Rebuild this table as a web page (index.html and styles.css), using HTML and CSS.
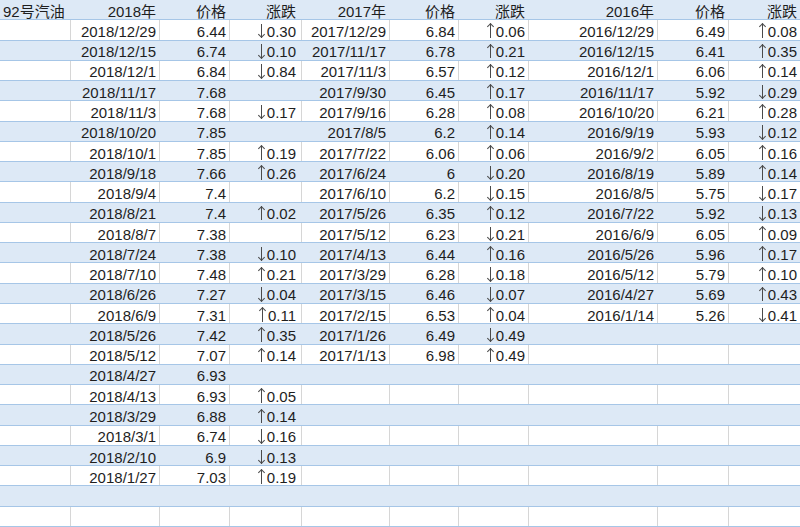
FILE: index.html
```html
<!DOCTYPE html>
<html lang="zh-CN">
<head>
<meta charset="utf-8">
<title>92号汽油</title>
<link rel="stylesheet" href="styles.css">
</head>
<body>
<div class="sheet">
  <div class="row blue"><span class="c l">92号汽油</span><span class="c">2018年</span><span class="c">价格</span><span class="c">涨跌</span><span class="c">2017年</span><span class="c">价格</span><span class="c">涨跌</span><span class="c">2016年</span><span class="c">价格</span><span class="c">涨跌</span></div>
  <div class="row"><span class="c"></span><span class="c">2018/12/29</span><span class="c">6.44</span><span class="c"><i class="dn"></i>0.30</span><span class="c">2017/12/29</span><span class="c">6.84</span><span class="c"><i class="up"></i>0.06</span><span class="c">2016/12/29</span><span class="c">6.49</span><span class="c"><i class="up"></i>0.08</span></div>
  <div class="row blue"><span class="c"></span><span class="c">2018/12/15</span><span class="c">6.74</span><span class="c"><i class="dn"></i>0.10</span><span class="c">2017/11/17</span><span class="c">6.78</span><span class="c"><i class="up"></i>0.21</span><span class="c">2016/12/15</span><span class="c">6.41</span><span class="c"><i class="up"></i>0.35</span></div>
  <div class="row"><span class="c"></span><span class="c">2018/12/1</span><span class="c">6.84</span><span class="c"><i class="dn"></i>0.84</span><span class="c">2017/11/3</span><span class="c">6.57</span><span class="c"><i class="up"></i>0.12</span><span class="c">2016/12/1</span><span class="c">6.06</span><span class="c"><i class="up"></i>0.14</span></div>
  <div class="row blue"><span class="c"></span><span class="c">2018/11/17</span><span class="c">7.68</span><span class="c"></span><span class="c">2017/9/30</span><span class="c">6.45</span><span class="c"><i class="up"></i>0.17</span><span class="c">2016/11/17</span><span class="c">5.92</span><span class="c"><i class="dn"></i>0.29</span></div>
  <div class="row"><span class="c"></span><span class="c">2018/11/3</span><span class="c">7.68</span><span class="c"><i class="dn"></i>0.17</span><span class="c">2017/9/16</span><span class="c">6.28</span><span class="c"><i class="up"></i>0.08</span><span class="c">2016/10/20</span><span class="c">6.21</span><span class="c"><i class="up"></i>0.28</span></div>
  <div class="row blue"><span class="c"></span><span class="c">2018/10/20</span><span class="c">7.85</span><span class="c"></span><span class="c">2017/8/5</span><span class="c">6.2</span><span class="c"><i class="up"></i>0.14</span><span class="c">2016/9/19</span><span class="c">5.93</span><span class="c"><i class="dn"></i>0.12</span></div>
  <div class="row"><span class="c"></span><span class="c">2018/10/1</span><span class="c">7.85</span><span class="c"><i class="up"></i>0.19</span><span class="c">2017/7/22</span><span class="c">6.06</span><span class="c"><i class="up"></i>0.06</span><span class="c">2016/9/2</span><span class="c">6.05</span><span class="c"><i class="up"></i>0.16</span></div>
  <div class="row blue"><span class="c"></span><span class="c">2018/9/18</span><span class="c">7.66</span><span class="c"><i class="up"></i>0.26</span><span class="c">2017/6/24</span><span class="c">6</span><span class="c"><i class="dn"></i>0.20</span><span class="c">2016/8/19</span><span class="c">5.89</span><span class="c"><i class="up"></i>0.14</span></div>
  <div class="row"><span class="c"></span><span class="c">2018/9/4</span><span class="c">7.4</span><span class="c"></span><span class="c">2017/6/10</span><span class="c">6.2</span><span class="c"><i class="dn"></i>0.15</span><span class="c">2016/8/5</span><span class="c">5.75</span><span class="c"><i class="dn"></i>0.17</span></div>
  <div class="row blue"><span class="c"></span><span class="c">2018/8/21</span><span class="c">7.4</span><span class="c"><i class="up"></i>0.02</span><span class="c">2017/5/26</span><span class="c">6.35</span><span class="c"><i class="up"></i>0.12</span><span class="c">2016/7/22</span><span class="c">5.92</span><span class="c"><i class="dn"></i>0.13</span></div>
  <div class="row"><span class="c"></span><span class="c">2018/8/7</span><span class="c">7.38</span><span class="c"></span><span class="c">2017/5/12</span><span class="c">6.23</span><span class="c"><i class="dn"></i>0.21</span><span class="c">2016/6/9</span><span class="c">6.05</span><span class="c"><i class="up"></i>0.09</span></div>
  <div class="row blue"><span class="c"></span><span class="c">2018/7/24</span><span class="c">7.38</span><span class="c"><i class="dn"></i>0.10</span><span class="c">2017/4/13</span><span class="c">6.44</span><span class="c"><i class="up"></i>0.16</span><span class="c">2016/5/26</span><span class="c">5.96</span><span class="c"><i class="up"></i>0.17</span></div>
  <div class="row"><span class="c"></span><span class="c">2018/7/10</span><span class="c">7.48</span><span class="c"><i class="up"></i>0.21</span><span class="c">2017/3/29</span><span class="c">6.28</span><span class="c"><i class="dn"></i>0.18</span><span class="c">2016/5/12</span><span class="c">5.79</span><span class="c"><i class="up"></i>0.10</span></div>
  <div class="row blue"><span class="c"></span><span class="c">2018/6/26</span><span class="c">7.27</span><span class="c"><i class="dn"></i>0.04</span><span class="c">2017/3/15</span><span class="c">6.46</span><span class="c"><i class="dn"></i>0.07</span><span class="c">2016/4/27</span><span class="c">5.69</span><span class="c"><i class="up"></i>0.43</span></div>
  <div class="row"><span class="c"></span><span class="c">2018/6/9</span><span class="c">7.31</span><span class="c"><i class="up"></i>0.11</span><span class="c">2017/2/15</span><span class="c">6.53</span><span class="c"><i class="up"></i>0.04</span><span class="c">2016/1/14</span><span class="c">5.26</span><span class="c"><i class="dn"></i>0.41</span></div>
  <div class="row blue"><span class="c"></span><span class="c">2018/5/26</span><span class="c">7.42</span><span class="c"><i class="up"></i>0.35</span><span class="c">2017/1/26</span><span class="c">6.49</span><span class="c"><i class="dn"></i>0.49</span><span class="c"></span><span class="c"></span><span class="c"></span></div>
  <div class="row"><span class="c"></span><span class="c">2018/5/12</span><span class="c">7.07</span><span class="c"><i class="up"></i>0.14</span><span class="c">2017/1/13</span><span class="c">6.98</span><span class="c"><i class="up"></i>0.49</span><span class="c"></span><span class="c"></span><span class="c"></span></div>
  <div class="row blue"><span class="c"></span><span class="c">2018/4/27</span><span class="c">6.93</span><span class="c"></span><span class="c"></span><span class="c"></span><span class="c"></span><span class="c"></span><span class="c"></span><span class="c"></span></div>
  <div class="row"><span class="c"></span><span class="c">2018/4/13</span><span class="c">6.93</span><span class="c"><i class="up"></i>0.05</span><span class="c"></span><span class="c"></span><span class="c"></span><span class="c"></span><span class="c"></span><span class="c"></span></div>
  <div class="row blue"><span class="c"></span><span class="c">2018/3/29</span><span class="c">6.88</span><span class="c"><i class="up"></i>0.14</span><span class="c"></span><span class="c"></span><span class="c"></span><span class="c"></span><span class="c"></span><span class="c"></span></div>
  <div class="row"><span class="c"></span><span class="c">2018/3/1</span><span class="c">6.74</span><span class="c"><i class="dn"></i>0.16</span><span class="c"></span><span class="c"></span><span class="c"></span><span class="c"></span><span class="c"></span><span class="c"></span></div>
  <div class="row blue"><span class="c"></span><span class="c">2018/2/10</span><span class="c">6.9</span><span class="c"><i class="dn"></i>0.13</span><span class="c"></span><span class="c"></span><span class="c"></span><span class="c"></span><span class="c"></span><span class="c"></span></div>
  <div class="row"><span class="c"></span><span class="c">2018/1/27</span><span class="c">7.03</span><span class="c"><i class="up"></i>0.19</span><span class="c"></span><span class="c"></span><span class="c"></span><span class="c"></span><span class="c"></span><span class="c"></span></div>
  <div class="row blue"><span class="c"></span><span class="c"></span><span class="c"></span><span class="c"></span><span class="c"></span><span class="c"></span><span class="c"></span><span class="c"></span><span class="c"></span><span class="c"></span></div>
  <div class="row"><span class="c"></span><span class="c"></span><span class="c"></span><span class="c"></span><span class="c"></span><span class="c"></span><span class="c"></span><span class="c"></span><span class="c"></span><span class="c"></span></div>
</div>
</body>
</html>
```

FILE: styles.css
```css
* { box-sizing: border-box; }
html, body { margin: 0; padding: 0; background: #ffffff; }
.sheet {
  width: 800px;
  height: 527px;
  display: grid;
  grid-template-rows: repeat(26, 1fr);
  font-family: "Liberation Sans", "Noto Sans CJK SC", sans-serif;
  font-size: 15px;
  color: #1e1e1e;
}
.row {
  display: grid;
  grid-template-columns: 71px 89px 70px 72px 88px 69px 70px 129px 71px 71px;
  border-bottom: 1px solid #a6c6e7;
  background: #ffffff;
  min-height: 0;
}
.row.blue { background: #dde9f6; }
.c {
  display: flex;
  align-items: center;
  justify-content: flex-end;
  padding: 3px 3px 0 0;
  line-height: 17px;
  white-space: nowrap;
  overflow: hidden;
  border-right: 1px solid #d6d6d6;
}
.row.blue .c { border-right-color: transparent; }
.c:last-child { border-right: none; }
.c.l { justify-content: flex-start; padding-left: 3px; }
.c:nth-child(4) { padding-right: 5px; }

/* thin tall arrows */
.up, .dn {
  display: inline-block;
  position: relative;
  width: 7px;
  height: 15px;
  margin-right: 2px;
  margin-top: -2px;
  flex: none;
}
.up::before, .dn::before {
  content: "";
  position: absolute;
  left: 3px;
  top: 1px;
  bottom: 0;
  width: 1px;
  background: #4a4a4a;
}
.up::after, .dn::after {
  content: "";
  position: absolute;
  left: 1.5px;
  width: 4px;
  height: 4px;
  border: 0 solid #4a4a4a;
  transform: rotate(45deg);
}
.up::after {
  top: 1.5px;
  border-left-width: 1px;
  border-top-width: 1px;
}
.dn::after {
  bottom: 0.5px;
  border-right-width: 1px;
  border-bottom-width: 1px;
}
```
